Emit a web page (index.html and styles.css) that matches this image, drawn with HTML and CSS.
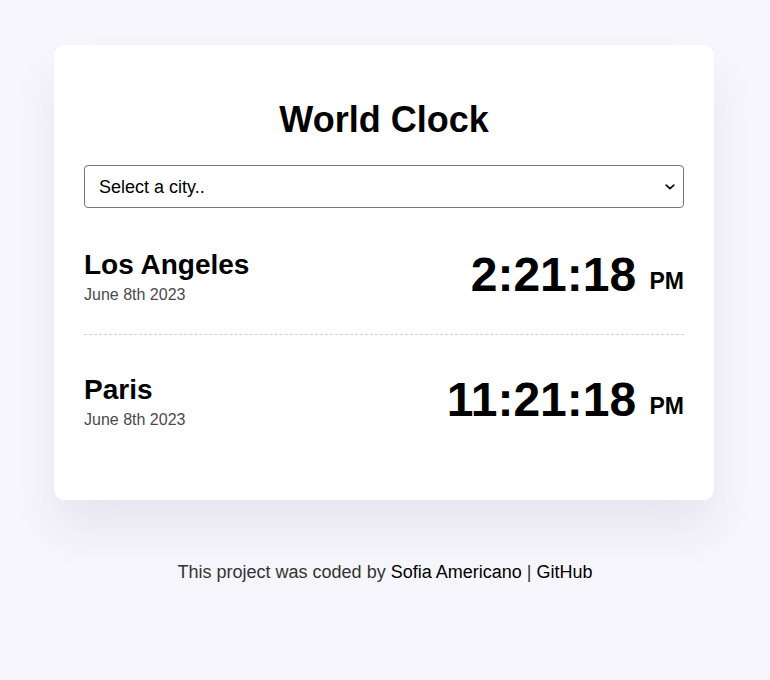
FILE: index.html
```html
<!DOCTYPE html>
<html lang="en">
<head>
<meta charset="utf-8">
<title>World Clock</title>
<link rel="stylesheet" href="styles.css">
</head>
<body>
<div class="container">
  <h1>World Clock</h1>
  <div class="select-wrap">
    <select class="city-select">
      <option>Select a city..</option>
      <option>Los Angeles</option>
      <option>Paris</option>
    </select>
    <svg class="chevron" width="10" height="6" viewBox="0 0 10 6" aria-hidden="true"><path d="M1.2 1.2 L5 4.6 L8.8 1.2" fill="none" stroke="#111" stroke-width="1.8" stroke-linecap="round" stroke-linejoin="round"/></svg>
  </div>
  <div class="cities">
    <div class="city">
      <div class="city-info">
        <h2 class="city-name">Los Angeles</h2>
        <div class="date">June 8th 2023</div>
      </div>
      <div class="time">2:21:18 <small>PM</small></div>
    </div>
    <div class="city">
      <div class="city-info">
        <h2 class="city-name">Paris</h2>
        <div class="date">June 8th 2023</div>
      </div>
      <div class="time">11:21:18 <small>PM</small></div>
    </div>
  </div>
</div>
<footer class="footer">
  This project was coded by <a href="#">Sofia Americano</a> | <a href="#">GitHub</a>
</footer>
</body>
</html>
```
FILE: styles.css
```css
* {
  box-sizing: border-box;
}

body {
  margin: 0;
  background: #f7f6fc;
  font-family: "Liberation Sans", Arial, sans-serif;
  color: #000;
}

.container {
  width: 660px;
  margin: 45px 0 0 calc(50% - 331px);
  background: #fff;
  padding: 30px 30px 41px;
  border-radius: 10px;
  box-shadow: 0 30px 50px rgba(40, 20, 80, 0.08);
}

h1 {
  font-size: 36px;
  font-weight: 700;
  text-align: center;
  margin: 24px 0;
}

.select-wrap {
  position: relative;
}

.city-select {
  display: block;
  width: 100%;
  height: 43px;
  padding: 0 14px;
  font-family: inherit;
  font-size: 18px;
  color: #000;
  background: #fff;
  border: 1px solid #767676;
  border-radius: 4px;
  appearance: none;
  -webkit-appearance: none;
}

.chevron {
  position: absolute;
  right: 9px;
  top: 19px;
  pointer-events: none;
}

.cities {
  margin-top: 2px;
}

.city {
  display: flex;
  justify-content: space-between;
  align-items: center;
  padding: 35px 0 30px;
  border-bottom: 1px dashed #cfcfcf;
}

.city:last-child {
  border-bottom: none;
}

.city-info {
  padding-top: 4px;
}

.city-name {
  margin: 0;
  font-size: 28px;
  font-weight: 700;
}

.date {
  margin-top: 5px;
  font-size: 16px;
  color: #4a4a4a;
}

.time {
  font-size: 48px;
  font-weight: 700;
}

.time small {
  font-size: 23px;
  vertical-align: 2px;
}

.footer {
  margin-top: 62px;
  text-align: center;
  font-size: 18px;
  color: #333;
}

.footer a {
  color: #000;
  text-decoration: none;
}
```
